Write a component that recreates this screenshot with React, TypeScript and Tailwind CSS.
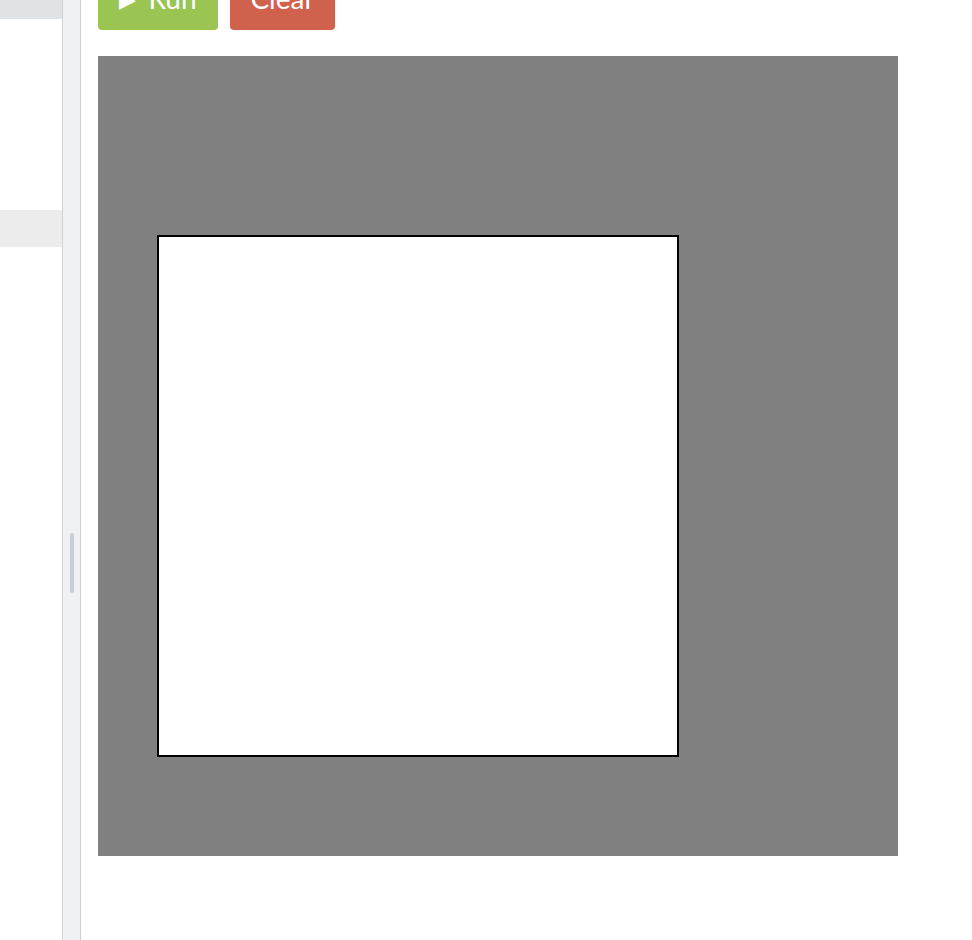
import React from 'react';

const Sidebar: React.FC = () => (
  <div className="w-[62px] shrink-0 bg-white flex flex-col">
    <div className="h-[19px] bg-[#dfe3e6]" />
    <div className="h-[191px]" />
    <div className="h-[37px] bg-[#ececec]" />
  </div>
);

const Splitter: React.FC = () => (
  <div className="w-[19px] shrink-0 border-x border-[#d2d2d2] bg-[#eff1f4] flex items-center justify-center">
    <div className="w-[4px] h-[60px] rounded-full bg-[#c5d0da] mt-[186px]" />
  </div>
);

export default function App() {
  return (
    <div className="flex h-[940px] w-[972px] overflow-hidden bg-white" style={{ fontFamily: 'Lato, "Open Sans", sans-serif' }}>
      <Sidebar />
      <Splitter />
      <div className="flex-1 pl-[17px]">
        <div className="flex gap-[12px] mt-[-20px]">
          <button className="w-[120px] h-[50px] pb-[14px] rounded-[4px] bg-[#9bc553] text-white text-[28px] flex items-center justify-center gap-[12px]">
            <span className="text-[22px]">▶</span>
            <span>Run</span>
          </button>
          <button className="w-[105px] h-[50px] pb-[14px] rounded-[4px] bg-[#d0624d] text-white text-[28px] flex items-center justify-center">
            Clear
          </button>
        </div>
        <div className="mt-[26px] w-[800px] h-[800px] bg-[#808080] pl-[59px] pt-[179px]">
          <div className="w-[522px] h-[522px] bg-white border-2 border-black" />
        </div>
      </div>
    </div>
  );
}
